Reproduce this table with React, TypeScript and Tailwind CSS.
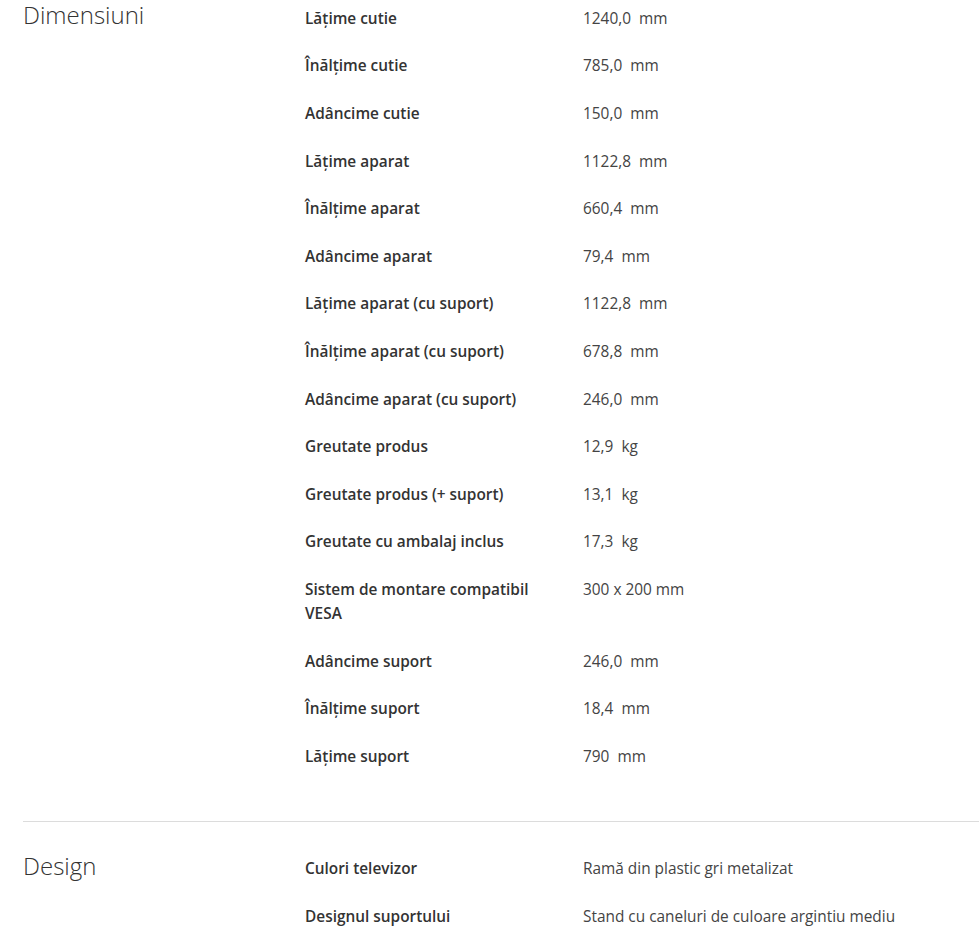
const dimensiuni: [string, string][] = [
  ['Lățime cutie', '1240,0  mm'],
  ['Înălțime cutie', '785,0  mm'],
  ['Adâncime cutie', '150,0  mm'],
  ['Lățime aparat', '1122,8  mm'],
  ['Înălțime aparat', '660,4  mm'],
  ['Adâncime aparat', '79,4  mm'],
  ['Lățime aparat (cu suport)', '1122,8  mm'],
  ['Înălțime aparat (cu suport)', '678,8  mm'],
  ['Adâncime aparat (cu suport)', '246,0  mm'],
  ['Greutate produs', '12,9  kg'],
  ['Greutate produs (+ suport)', '13,1  kg'],
  ['Greutate cu ambalaj inclus', '17,3  kg'],
  ['Sistem de montare compatibil VESA', '300 x 200 mm'],
  ['Adâncime suport', '246,0  mm'],
  ['Înălțime suport', '18,4  mm'],
  ['Lățime suport', '790  mm'],
]

const design: [string, string][] = [
  ['Culori televizor', 'Ramă din plastic gri metalizat'],
  ['Designul suportului', 'Stand cu caneluri de culoare argintiu mediu'],
]

function SpecSection({ title, rows }: { title: string; rows: [string, string][] }) {
  return (
    <div className="flex">
      {/* Section title */}
      <div className="w-[282px] shrink-0 pt-[5px]">
        <h2 className="text-[24px] leading-[30px] font-light text-[#333]">{title}</h2>
      </div>

      {/* Spec rows */}
      <div className="flex-1">
        {rows.map(([label, value]) => (
          <div key={label} className="flex py-[11.8px] text-[15.4px] leading-6">
            <div className="w-[278px] shrink-0 pr-[30px] font-semibold text-[#333]">{label}</div>
            <div className="whitespace-pre text-[#444]">{value}</div>
          </div>
        ))}
      </div>
    </div>
  )
}

export default function App() {
  return (
    <div className="min-h-[930px] bg-white pl-[23px] overflow-hidden" style={{ fontFamily: '"Open Sans", Lato, sans-serif' }}>
      <div className="-mt-[5px]">
        <SpecSection title="Dimensiuni" rows={dimensiuni} />
      </div>

      <div className="mt-[40px] border-t border-[#dcdcdc] pt-[24px]">
        <SpecSection title="Design" rows={design} />
      </div>
    </div>
  )
}
